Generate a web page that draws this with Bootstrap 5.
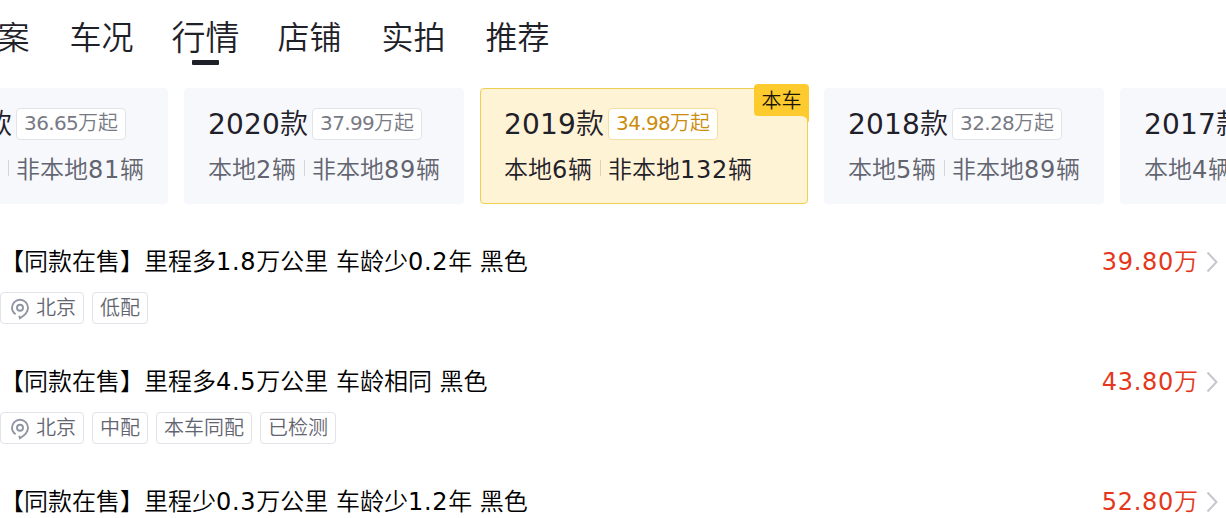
<!DOCTYPE html>
<html lang="zh-CN">
<head>
    <meta charset="UTF-8">
    <meta name="viewport" content="width=device-width, initial-scale=1.0">
    <title>行情</title>
    <link href="https://cdn.jsdelivr.net/npm/bootstrap@5.3.0/dist/css/bootstrap.min.css" rel="stylesheet">
    <style>
        body {
            font-family: "DejaVu Sans", "Noto Sans CJK SC", sans-serif;
            font-weight: 350;
            color: #000;
            font-size: 24px;
            line-height: 32px;
            height: 518px;
            overflow: hidden;
        }
        .tab-bar {
            height: 88px;
            gap: 40px;
            margin-left: -34.5px;
            padding-top: 14px;
            font-size: 32px;
            line-height: 48px;
            color: #1f2129;
        }
        .tab-item {
            width: 64px;
        }
        .tab-current {
            font-size: 34px;
            width: 68px;
            margin: 0 -2px;
        }
        .tab-current::after {
            content: "";
            display: block;
            width: 27px;
            height: 5px;
            margin: -2px auto 0;
            background: #1f2129;
            border-radius: 1px;
        }
        .year-strip {
            gap: 16px;
            margin-left: -112px;
        }
        .year-card {
            width: 280px;
            height: 116px;
            padding: 20px 24px 0;
            background: #f7f8fc;
            border-radius: 4px;
            color: #62656f;
        }
        .year-card.active {
            width: 328px;
            padding: 19px 23px 0;
            background: #fff3d6;
            border: 1px solid #efcf4f;
            color: #1f2129;
        }
        .year-name {
            height: 32px;
            font-size: 28px;
            line-height: 34px;
            color: #1f2129;
        }
        .num {
            font-weight: 400;
            letter-spacing: .7px;
        }
        .year-name .num {
            letter-spacing: .19px;
        }
        .chip {
            height: 32px;
            padding: 0 7px;
            font-size: 20px;
            line-height: 30px;
            background: #fff;
            border: 1px solid #e1e3e9;
            border-radius: 4px;
            color: #62656f;
        }
        .year-card .chip {
            margin-left: 4px;
            line-height: 29px;
            color: #777a83;
        }
        .chip .num {
            letter-spacing: -.64px;
        }
        .year-card.active .chip {
            border-color: #f3dfa0;
            color: #cb8c0b;
        }
        .year-count {
            margin-top: 14px;
        }
        .split {
            width: 1px;
            height: 16px;
            margin: 0 7px 4px 8px;
            background: #d4d6dc;
        }
        .active .split {
            background: #dcd2b8;
        }
        .own-flag {
            top: -5px;
            right: -2px;
            width: 55px;
            height: 32px;
            font-size: 20px;
            line-height: 34px;
            color: #1b1608;
            background: #fdcb2e;
            border-radius: 4px 4px 0 4px;
        }
        .own-fold {
            top: 27px;
            right: -2px;
        }
        .car-list {
            padding-top: 42px;
        }
        .car-item {
            height: 120px;
        }
        .car-item:last-child {
            height: 32px;
        }
        .tag-row {
            margin-top: 14px;
        }
        .price {
            color: #e5371c;
        }
        .pin {
            margin: 0 7px 0 3px;
        }
    </style>
</head>
<body>
    <nav class="tab-bar d-flex text-nowrap">
        <div class="tab-item">档案</div>
        <div class="tab-item">车况</div>
        <div class="tab-item tab-current">行情</div>
        <div class="tab-item">店铺</div>
        <div class="tab-item">实拍</div>
        <div class="tab-item">推荐</div>
    </nav>

    <div class="year-strip d-flex text-nowrap">
        <div class="year-card flex-shrink-0">
            <div class="d-flex"><span class="year-name"><span class="num">2021</span>款</span><span class="chip"><span class="num">36.65</span>万起</span></div>
            <div class="year-count d-flex align-items-center"><span>本地<span class="num">3</span>辆</span><i class="split"></i><span>非本地<span class="num">81</span>辆</span></div>
        </div>
        <div class="year-card flex-shrink-0">
            <div class="d-flex"><span class="year-name"><span class="num">2020</span>款</span><span class="chip"><span class="num">37.99</span>万起</span></div>
            <div class="year-count d-flex align-items-center"><span>本地<span class="num">2</span>辆</span><i class="split"></i><span>非本地<span class="num">89</span>辆</span></div>
        </div>
        <div class="year-card active flex-shrink-0 position-relative">
            <div class="d-flex"><span class="year-name"><span class="num">2019</span>款</span><span class="chip"><span class="num">34.98</span>万起</span></div>
            <div class="year-count d-flex align-items-center"><span>本地<span class="num">6</span>辆</span><i class="split"></i><span>非本地<span class="num">132</span>辆</span></div>
            <span class="own-flag position-absolute text-center">本车</span>
            <svg class="own-fold position-absolute" width="7" height="7" viewBox="0 0 7 7"><path d="M0 0H7V5L5.5 7V5Q5 1 0 0Z" fill="#fdcb2e"/></svg>
        </div>
        <div class="year-card flex-shrink-0">
            <div class="d-flex"><span class="year-name"><span class="num">2018</span>款</span><span class="chip"><span class="num">32.28</span>万起</span></div>
            <div class="year-count d-flex align-items-center"><span>本地<span class="num">5</span>辆</span><i class="split"></i><span>非本地<span class="num">89</span>辆</span></div>
        </div>
        <div class="year-card flex-shrink-0">
            <div class="d-flex"><span class="year-name"><span class="num">2017</span>款</span></div>
            <div class="year-count d-flex align-items-center"><span>本地<span class="num">4</span>辆</span></div>
        </div>
    </div>

    <div class="car-list text-nowrap">
        <div class="car-item">
            <div class="d-flex align-items-center">
                <span class="me-auto">【同款在售】里程多<span class="num">1.8</span>万公里 车龄少<span class="num">0.2</span>年 黑色</span>
                <span class="price"><span class="num">39.80</span>万</span>
                <svg class="ms-2 me-2" width="12" height="22" viewBox="0 0 12 22"><path d="M1.5 1.5L10.5 11L1.5 20.5" fill="none" stroke="#c5c7cd" stroke-width="2"/></svg>
            </div>
            <div class="tag-row d-flex gap-2">
                <span class="chip d-flex"><svg class="pin" width="18" height="28" viewBox="0 0 18 28"><path d="M4.6 21.2C2.3 19.6 1 17.4 1 14.8A8 8 0 0 1 17 14.8C17 18.5 14.5 22 9 25.2L8.3 22.8" fill="none" stroke="#9194a3" stroke-width="1.9"/><circle cx="9" cy="14.8" r="3" fill="none" stroke="#9194a3" stroke-width="1.9"/></svg>北京</span>
                <span class="chip">低配</span>
            </div>
        </div>
        <div class="car-item">
            <div class="d-flex align-items-center">
                <span class="me-auto">【同款在售】里程多<span class="num">4.5</span>万公里 车龄相同 黑色</span>
                <span class="price"><span class="num">43.80</span>万</span>
                <svg class="ms-2 me-2" width="12" height="22" viewBox="0 0 12 22"><path d="M1.5 1.5L10.5 11L1.5 20.5" fill="none" stroke="#c5c7cd" stroke-width="2"/></svg>
            </div>
            <div class="tag-row d-flex gap-2">
                <span class="chip d-flex"><svg class="pin" width="18" height="28" viewBox="0 0 18 28"><path d="M4.6 21.2C2.3 19.6 1 17.4 1 14.8A8 8 0 0 1 17 14.8C17 18.5 14.5 22 9 25.2L8.3 22.8" fill="none" stroke="#9194a3" stroke-width="1.9"/><circle cx="9" cy="14.8" r="3" fill="none" stroke="#9194a3" stroke-width="1.9"/></svg>北京</span>
                <span class="chip">中配</span>
                <span class="chip">本车同配</span>
                <span class="chip">已检测</span>
            </div>
        </div>
        <div class="car-item">
            <div class="d-flex align-items-center">
                <span class="me-auto">【同款在售】里程少<span class="num">0.3</span>万公里 车龄少<span class="num">1.2</span>年 黑色</span>
                <span class="price"><span class="num">52.80</span>万</span>
                <svg class="ms-2 me-2" width="12" height="22" viewBox="0 0 12 22"><path d="M1.5 1.5L10.5 11L1.5 20.5" fill="none" stroke="#c5c7cd" stroke-width="2"/></svg>
            </div>
        </div>
    </div>

    <script src="https://cdn.jsdelivr.net/npm/bootstrap@5.3.0/dist/js/bootstrap.bundle.min.js"></script>
</body>
</html>
